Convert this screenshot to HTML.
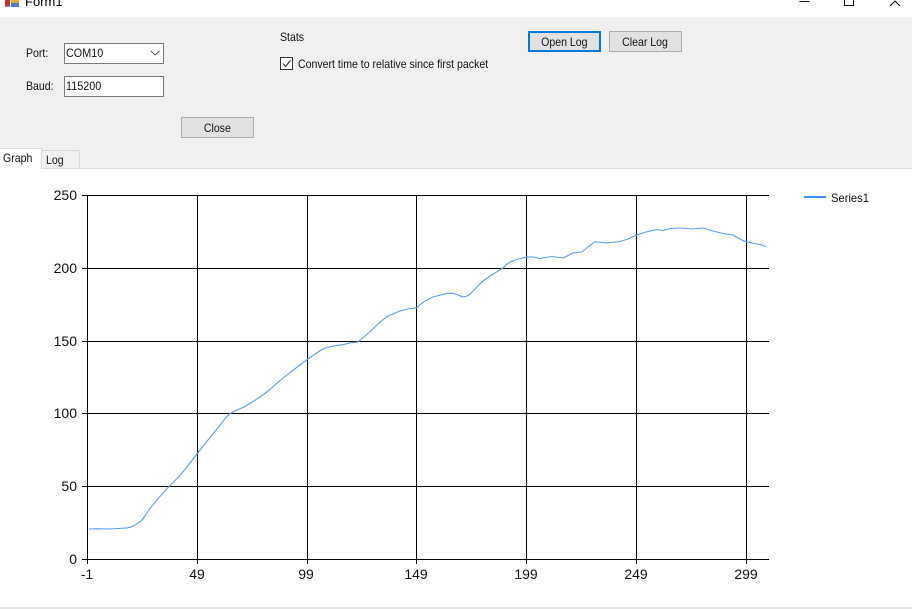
<!DOCTYPE html>
<html><head><meta charset="utf-8"><style>
html,body{margin:0;padding:0;background:#fff}
#r{position:relative;width:912px;height:609px;overflow:hidden;background:#fff;font-family:"Liberation Sans",sans-serif;font-size:12px;color:#111}
.a{position:absolute;white-space:nowrap}
.t{position:absolute;white-space:nowrap;line-height:14px;transform:scaleX(.88);transform-origin:0 0}
.b{position:absolute;box-sizing:border-box;background:#e1e1e1;border:1px solid #adadad;text-align:center;white-space:nowrap;height:21px;width:73px;line-height:21px}
.b span{display:inline-block;transform:scaleX(.88)}
.in{position:absolute;box-sizing:border-box;background:#fff;border:1px solid #7a7a7a;width:100px;height:21px;line-height:19px;padding-left:1px}
.in span{display:inline-block;transform:scaleX(.9);transform-origin:0 0}
.n{display:inline-block;transform:scaleX(.88);transform-origin:0 0}
svg{position:absolute;left:0;top:0}
svg text{font-family:"Liberation Sans",sans-serif;font-size:14px;fill:#111}
</style></head><body><div id="r">
<div class="a" style="left:25px;top:-6px;font-size:13px;line-height:15px;color:#000">Form1</div>
<div class="a" style="left:0;top:17px;width:912px;height:151px;background:#f0f0f0"></div>
<div class="a" style="left:0;top:168px;width:912px;height:1px;background:#dcdcdc"></div>
<div class="a" style="left:0;top:607px;width:912px;height:2px;background:#e4e4e4"></div>

<div class="t" style="left:26px;top:46px">Port:</div>
<div class="t" style="left:26px;top:79px">Baud:</div>
<div class="in" style="left:64px;top:43px"><span>COM10</span></div>
<div class="in" style="left:64px;top:76px"><span>115200</span></div>
<div class="t" style="left:280px;top:30px">Stats</div>
<div class="t" style="left:298px;top:57px">Convert time to relative since first packet</div>
<div class="b" style="left:181px;top:117px"><span>Close</span></div>
<div class="b" style="left:528px;top:31px;border:2px solid #0078d7;line-height:18px"><span>Open Log</span></div>
<div class="b" style="left:609px;top:31px"><span>Clear Log</span></div>

<div class="a" style="left:41px;top:150px;width:39px;height:18px;box-sizing:border-box;background:#f0f0f0;border:1px solid #d9d9d9;border-bottom:none;padding-left:4px;line-height:19px"><span class="n">Log</span></div>
<div class="a" style="left:0;top:148px;width:42px;height:21px;box-sizing:border-box;background:#fff;border-top:1px solid #d9d9d9;border-right:1px solid #d9d9d9;padding-left:3px;line-height:18px"><span class="n">Graph</span></div>

<svg width="912" height="609" viewBox="0 0 912 609">
<rect x="5" y="-1" width="5" height="7" fill="#c8322c"/>
<rect x="11" y="-1" width="8" height="4" fill="#e5a82e"/>
<rect x="11" y="3" width="8" height="4" fill="#4a7fd0"/>
<rect x="5" y="6" width="5" height="1" fill="#999"/>
<path d="M799.500 1.500H809.500" stroke="#111" stroke-width="1" fill="none"/>
<path d="M844.500 -2V5.500H853.500V-2" stroke="#111" stroke-width="1" fill="none"/>
<path d="M890 6L895 1L900 6" stroke="#111" stroke-width="1" fill="none"/>
<path d="M151 51L155 55L159.500 51" stroke="#555" stroke-width="1" fill="none"/>
<rect x="280.500" y="57.500" width="12" height="12" fill="#fff" stroke="#333"/>
<path d="M283 63.500L285.500 66.500L290.500 60.500" stroke="#333" stroke-width="1.200" fill="none"/>
<g stroke="#000" stroke-width="1" fill="none" shape-rendering="crispEdges">
<path d="M82 195.500H769M82 268.500H769M82 341.500H769M82 413.500H769M82 486.500H769M82 559.500H769"/>
<path d="M87.500 195V564M197.500 195V564M307.500 195V564M416.500 195V564M526.500 195V564M636.500 195V564M746.500 195V564"/>
</g>
<polyline fill="none" stroke="#5a9df5" stroke-width="1.100" stroke-linejoin="round" points="89,529 98,528.700 108,529 118,528.500 126.700,528 130,527.200 133,526 137,523.800 141.700,520.500 146,514.500 150,508.300 158.300,498.300 168.300,487.300 180,475.500 188.500,465 197.300,453.500 208,440 216.700,429.300 226.700,416.700 230,413.700 233,411.800 243,407.500 253,401.500 260,397 270,389.500 280,380.500 290,372.500 298,366.500 307,359.700 316.700,353 322,349.500 326.700,347.500 335,345.800 343,344.700 350,342.800 358,342 365,336 371.700,330 380,322 388,316 400,311 408,309 416.700,307.700 421,304 425,301 433,297 446.700,293.300 453,293.300 458,295 463,297 467,296 470,294 476,288 481.700,282 490,276 503,268 507,264 510,262 518,259 526.700,257 533,257 540,258.500 551.700,256.500 563,258 568,255.500 573,253 581.700,252 588,247 595,241.700 606.700,243 620,241.500 628,239 636.700,235 646,232 656.700,229.500 663,230.500 670,228.500 680,228 693,229 703,228 713,231 723,233.500 733,235 739,238.500 745,241.500 752,243 760,244.500 766,246.500"/>
<g text-anchor="end">
<text x="77" y="200">250</text><text x="77" y="273">200</text><text x="77" y="346">150</text><text x="77" y="418">100</text><text x="77" y="491">50</text><text x="77" y="564">0</text>
</g>
<g text-anchor="middle">
<text x="87" y="579">-1</text><text x="197" y="579">49</text><text x="306" y="579">99</text><text x="416" y="579">149</text><text x="526" y="579">199</text><text x="636" y="579">249</text><text x="746" y="579">299</text>
</g>
<rect x="804" y="196" width="22" height="2" fill="#3f8ff0"/>
<text x="831" y="202" style="font-size:12px" textLength="38" lengthAdjust="spacingAndGlyphs">Series1</text>
</svg>
</div></body></html>
